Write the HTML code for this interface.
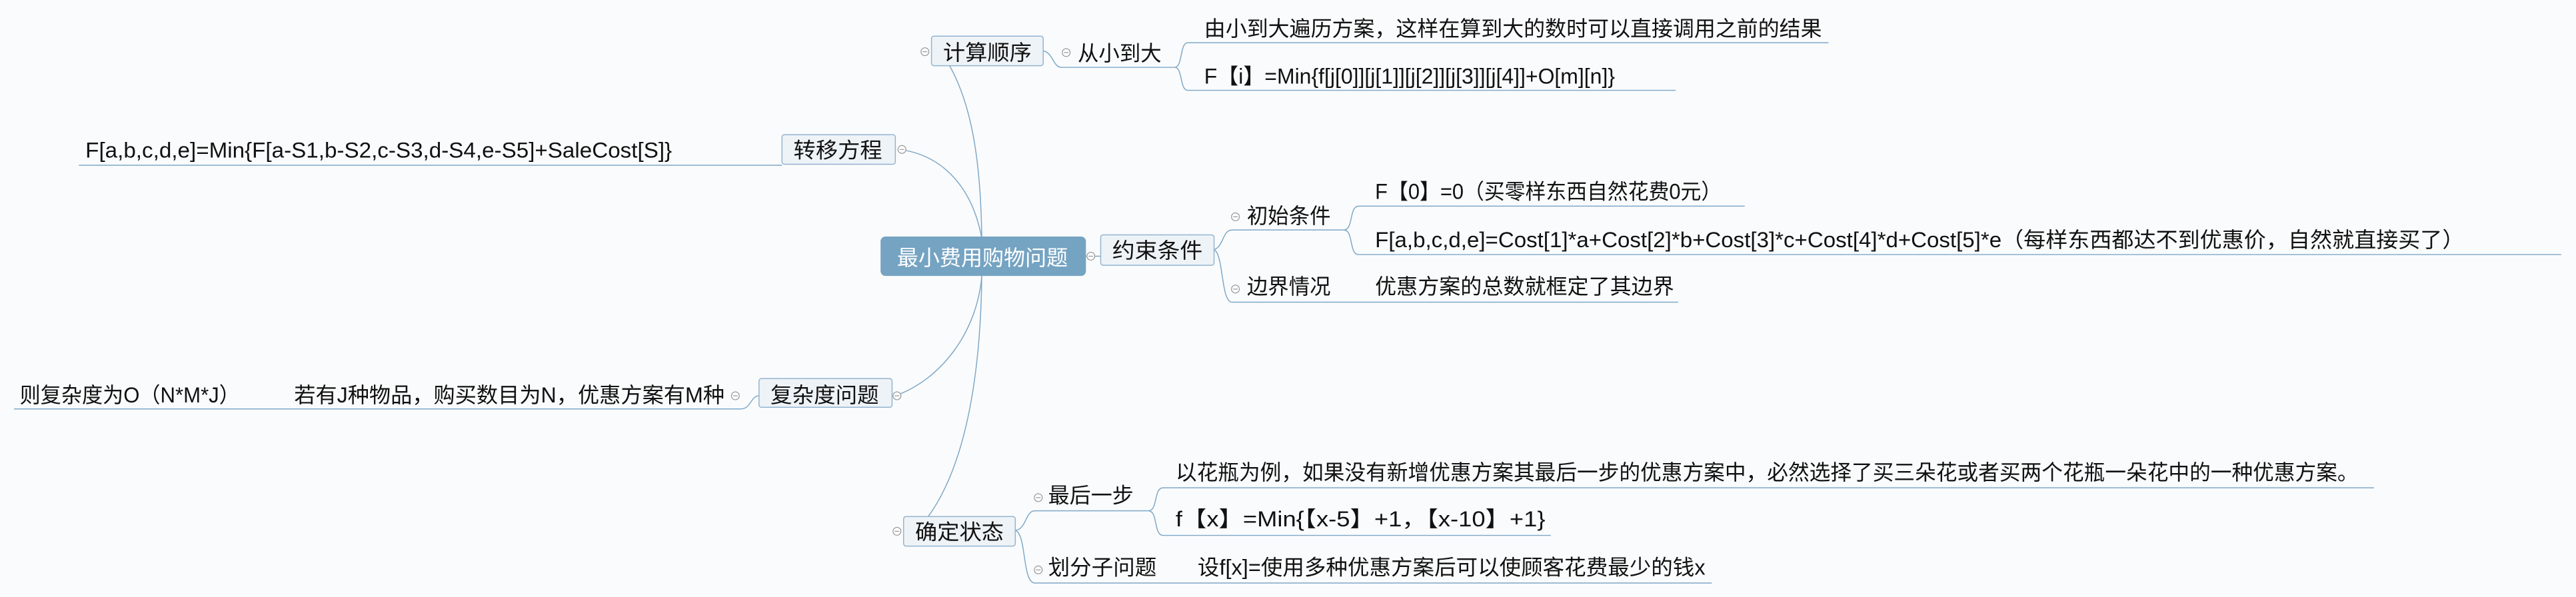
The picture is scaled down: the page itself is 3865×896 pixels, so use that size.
<!DOCTYPE html>
<html><head><meta charset="utf-8"><style>
html,body{margin:0;padding:0;background:#fafbfc;}
svg{display:block}
text{font-family:"Liberation Sans","Noto Sans CJK SC",sans-serif;font-size:13px;fill:#111}
</style></head><body>
<svg width="3865" height="896" viewBox="0 0 1568 363.5" preserveAspectRatio="none" xmlns="http://www.w3.org/2000/svg">
<rect width="1568" height="364" fill="#fafbfc"/>
<g fill="none" stroke="#7ea8c8" stroke-width="0.6">
<!-- main branches -->
<path d="M597.6,145 C597,100 592,65 578,40"/>
<path d="M548,91 C575,95 592,115 597.6,145"/>
<path d="M545,241 C575,230 595,200 597.6,168"/>
<path d="M597.6,168 C597,220 590,280 565,314.5"/>
<path d="M661,156 L670,156"/>
<!-- 计算顺序 -->
<path d="M635,31 C641,32 641,41 646,41 L715,41"/>
<path d="M715,41 C720,41 718,26 723,26 L1113,26"/>
<path d="M715,41 C720,41 718,55 723,55 L1020,55"/>
<!-- 转移方程 -->
<path d="M476,100.6 L48,100.6"/>
<!-- 复杂度问题 -->
<path d="M462,241 C457,241 457,249 451,249 L8.5,249"/>
<!-- 约束条件 -->
<path d="M739,152 C745,150 744,140 750,140 L818,140"/>
<path d="M818,140 C824,140 821,125.5 827,125.5 L1062,125.5"/>
<path d="M818,140 C824,140 821,155 827,155 L1559,155"/>
<path d="M739,152 C745,155 743,184 750,184 L1021.5,184"/>
<!-- 确定状态 -->
<path d="M618,323 C625,322 624,311 630,311 L699,311"/>
<path d="M699,311 C705,311 702,297 708,297 L1445,297"/>
<path d="M699,311 C705,311 702,326 708,326 L944,326"/>
<path d="M618,323 C625,325 622,355 630,355 L1042,355"/>
</g>
<!-- boxes -->
<rect x="536" y="144" width="125" height="24" rx="3" fill="#75a3c2"/>
<text x="546" y="161.5" textLength="104" lengthAdjust="spacingAndGlyphs" style="fill:#fff">最小费用购物问题</text>
<g fill="#eef3f7" stroke="#93b4cf" stroke-width="0.6">
<rect x="567" y="22" width="68" height="18" rx="1.5"/>
<rect x="476" y="82" width="69" height="18" rx="1.5"/>
<rect x="670" y="143" width="69" height="18.5" rx="1.5"/>
<rect x="462" y="230.5" width="81" height="17.5" rx="1.5"/>
<rect x="550" y="314.5" width="68" height="18" rx="1.5"/>
</g>
<!-- collapse circles -->
<g fill="#fff" stroke="#999" stroke-width="0.5">
<circle cx="563" cy="31.5" r="2.4"/><circle cx="649" cy="32" r="2.4"/>
<circle cx="549" cy="91" r="2.4"/><circle cx="664" cy="156" r="2.4"/>
<circle cx="752" cy="132" r="2.4"/><circle cx="752" cy="176" r="2.4"/>
<circle cx="447.6" cy="241" r="2.4"/><circle cx="546" cy="241" r="2.4"/>
<circle cx="546" cy="323.5" r="2.4"/><circle cx="632" cy="303" r="2.4"/><circle cx="632" cy="347" r="2.4"/>
</g>
<g stroke="#999" stroke-width="0.5">
<path d="M561.6,31.5h2.8M647.6,32h2.8M547.6,91h2.8M662.6,156h2.8M750.6,132h2.8M750.6,176h2.8M446.2,241h2.8M544.6,241h2.8M544.6,323.5h2.8M630.6,303h2.8M630.6,347h2.8"/>
</g>
<!-- texts -->
<text x="574" y="36.5" textLength="54" lengthAdjust="spacingAndGlyphs">计算顺序</text>
<text x="656" y="37" textLength="51" lengthAdjust="spacingAndGlyphs">从小到大</text>
<text x="733" y="22" textLength="376" lengthAdjust="spacingAndGlyphs">由小到大遍历方案，这样在算到大的数时可以直接调用之前的结果</text>
<text x="733" y="51" textLength="250" lengthAdjust="spacingAndGlyphs">F【i】=Min{f[j[0]][j[1]][j[2]][j[3]][j[4]]+O[m][n]}</text>
<text x="483" y="96" textLength="54" lengthAdjust="spacingAndGlyphs">转移方程</text>
<text x="52" y="96" textLength="357" lengthAdjust="spacingAndGlyphs">F[a,b,c,d,e]=Min{F[a-S1,b-S2,c-S3,d-S4,e-S5]+SaleCost[S]}</text>
<text x="677" y="157" textLength="55" lengthAdjust="spacingAndGlyphs">约束条件</text>
<text x="759" y="136" textLength="51" lengthAdjust="spacingAndGlyphs">初始条件</text>
<text x="837" y="121" textLength="211" lengthAdjust="spacingAndGlyphs">F【0】=0（买零样东西自然花费0元）</text>
<text x="837" y="150.5" textLength="663" lengthAdjust="spacingAndGlyphs">F[a,b,c,d,e]=Cost[1]*a+Cost[2]*b+Cost[3]*c+Cost[4]*d+Cost[5]*e（每样东西都达不到优惠价，自然就直接买了）</text>
<text x="759" y="179" textLength="51" lengthAdjust="spacingAndGlyphs">边界情况</text>
<text x="837" y="179" textLength="182" lengthAdjust="spacingAndGlyphs">优惠方案的总数就框定了其边界</text>
<text x="469" y="245" textLength="66" lengthAdjust="spacingAndGlyphs">复杂度问题</text>
<text x="179" y="245" textLength="262" lengthAdjust="spacingAndGlyphs">若有J种物品，购买数目为N，优惠方案有M种</text>
<text x="12" y="245" textLength="134" lengthAdjust="spacingAndGlyphs">则复杂度为O（N*M*J）</text>
<text x="557" y="328.5" textLength="54" lengthAdjust="spacingAndGlyphs">确定状态</text>
<text x="638" y="306" textLength="52" lengthAdjust="spacingAndGlyphs">最后一步</text>
<text x="715.6" y="292" textLength="720" lengthAdjust="spacingAndGlyphs">以花瓶为例，如果没有新增优惠方案其最后一步的优惠方案中，必然选择了买三朵花或者买两个花瓶一朵花中的一种优惠方案。</text>
<text x="715.6" y="320.5" textLength="225" lengthAdjust="spacingAndGlyphs">f【x】=Min{【x-5】+1，【x-10】+1}</text>
<text x="638" y="350" textLength="66" lengthAdjust="spacingAndGlyphs">划分子问题</text>
<text x="729" y="350" textLength="309" lengthAdjust="spacingAndGlyphs">设f[x]=使用多种优惠方案后可以使顾客花费最少的钱x</text>
</svg>
</body></html>
